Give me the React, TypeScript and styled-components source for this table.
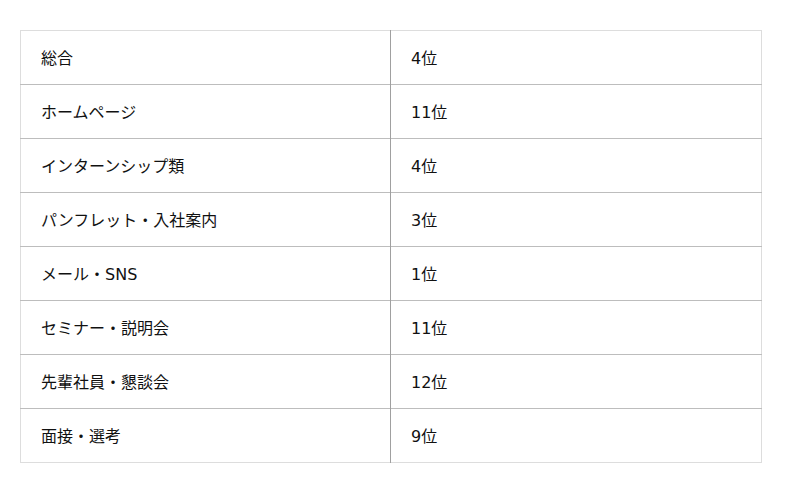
import React from 'react';
import styled, { createGlobalStyle } from 'styled-components';

const rows = [
  { label: '総合', rank: '4位' },
  { label: 'ホームページ', rank: '11位' },
  { label: 'インターンシップ類', rank: '4位' },
  { label: 'パンフレット・入社案内', rank: '3位' },
  { label: 'メール・SNS', rank: '1位' },
  { label: 'セミナー・説明会', rank: '11位' },
  { label: '先輩社員・懇談会', rank: '12位' },
  { label: '面接・選考', rank: '9位' },
];

export default function App() {
  return (
    <Page>
      <GlobalStyle />
      <RankTable>
        <tbody>
          {rows.map((row) => (
            <Row key={row.label}>
              <LabelCell>{row.label}</LabelCell>
              <RankCell>{row.rank}</RankCell>
            </Row>
          ))}
        </tbody>
      </RankTable>
    </Page>
  );
}

const GlobalStyle = createGlobalStyle`
  body {
    margin: 0;
    background: #fff;
    font-family: "DejaVu Sans", "Noto Sans CJK JP", sans-serif;
    color: #111;
  }
`;

const Page = styled.div`
  padding: 30px 38px 0 20px;
`;

const RankTable = styled.table`
  width: 742px;
  border-collapse: collapse;
  border: 1px solid #ddd;
`;

const Row = styled.tr`
  height: 54px;
  border-bottom: 1px solid #bdbdbd;

  &:last-child {
    border-bottom: 1px solid #ddd;
  }
`;

const LabelCell = styled.td`
  width: 370px;
  padding: 0 0 2px 20px;
  font-size: 16px;
  border-right: 1px solid #a0a0a0;
  box-sizing: border-box;
`;

const RankCell = styled.td`
  padding: 0 0 2px 20px;
  font-size: 16px;
`;
